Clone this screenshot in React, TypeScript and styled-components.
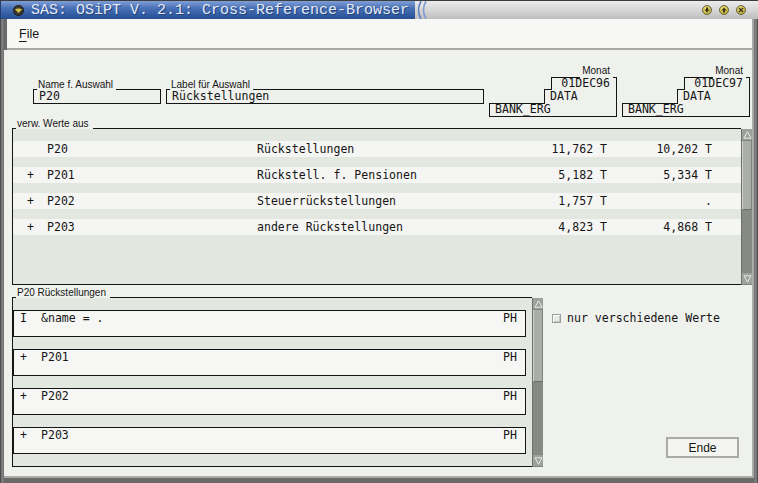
import React from 'react';
import styled, { createGlobalStyle } from 'styled-components';

const MONO = `"DejaVu Sans Mono", "Liberation Mono", monospace`;
const SANS = `"Liberation Sans", Arial, sans-serif`;
const INK = '#151515';

const GlobalStyle = createGlobalStyle`
  html, body {
    margin: 0;
    padding: 0;
    background: #5e5e5e;
  }
  body {
    width: 758px;
    height: 483px;
    overflow: hidden;
  }
  * {
    box-sizing: border-box;
  }
`;

const Window = styled.div`
  width: 758px;
  height: 483px;
  display: flex;
  flex-direction: column;
  background: linear-gradient(to right, #3a3a3a, #8a8a8a 2px, #6a6a6a 4px, #6a6a6a 754px, #8a8a8a 756px, #3a3a3a);
`;

const TitleBar = styled.div`
  height: 19px;
  display: flex;
  border-top: 1px solid #3c3c3c;
  background: linear-gradient(#ececec, #d2d2d2 60%, #bdbdbd);
`;

const TitleTab = styled.div`
  width: 415px;
  display: flex;
  align-items: center;
  gap: 7px;
  padding-left: 12px;
  background: linear-gradient(#7f9fd6, #4a71b6 40%, #3059a0 80%, #2a4f92);
  border-left: 1px solid #233c6c;
`;

const TitleText = styled.span`
  font: 15px/17px "Liberation Mono", monospace;
  color: #e4ebf7;
  text-shadow: 1px 1px 0 #23427c;
  white-space: pre;
`;

const TitleFill = styled.div`
  flex: 1;
`;

const TitleButtons = styled.div`
  display: flex;
  align-items: center;
  gap: 7px;
  padding-right: 12px;
`;

const Frame = styled.div`
  flex: 1;
  display: flex;
  flex-direction: column;
  padding: 0 4px 5px 4px;
`;

const MenuBar = styled.div`
  height: 31px;
  margin-left: 3px;
  display: flex;
  align-items: center;
  padding-left: 12px;
  background: #f7f7f5;
  border-right: 2px solid #a8a8a8;
  border-bottom: 2px solid #a8a8a8;
`;

const MenuItem = styled.span`
  font: 12.5px ${SANS};
  color: ${INK};
  u {
    text-underline-offset: 3px;
  }
`;

const Content = styled.div`
  flex: 1;
  display: flex;
  flex-direction: column;
  background: #eff1ed;
  border-right: 2px solid #a9aba7;
  border-bottom: 2px solid #a9aba7;
`;

const HeaderRow = styled.div`
  display: flex;
  gap: 5px;
  margin-top: 17px;
  padding-left: 29px;
`;

/* caption line: tick, label, rule -- the rule is the top edge of the box below */
const Caption = styled.div<{ $h: number; $trim?: number; $indent?: number }>`
  height: ${p => p.$h}px;
  display: flex;
  align-items: flex-end;
  margin-left: ${p => p.$indent || 0}px;
  margin-right: ${p => p.$trim || 0}px;
`;

const Tick = styled.span<{ $w: number }>`
  width: ${p => p.$w}px;
  border-bottom: 1px solid ${INK};
`;

const Rule = styled.span`
  flex: 1;
  border-bottom: 1px solid ${INK};
`;

const CaptionText = styled.span<{ $pl?: number; $pr?: number; $lift?: number }>`
  font: 10px/11px ${SANS};
  color: ${INK};
  white-space: nowrap;
  padding: 0 ${p => p.$pr ?? 3}px 0 ${p => p.$pl ?? 1}px;
  margin-bottom: ${p => p.$lift || 0}px;
`;

const FieldWrap = styled.div<{ $w: number }>`
  width: ${p => p.$w}px;
  margin-top: 11px;
`;

const FieldBox = styled.div`
  height: 14px;
  border: 1px solid ${INK};
  border-top: none;
  padding-left: 5px;
  font: 11.55px/13px ${MONO};
  color: ${INK};
  white-space: pre;
`;

const ColHead = styled.div`
  width: 128px;
  display: flex;
  flex-direction: column;
`;

const StepRow = styled.div<{ $indent: number; $step: number; $h: number; $right?: boolean; $last?: boolean }>`
  margin-left: ${p => p.$indent}px;
  height: ${p => p.$h}px;
  border-left: 1px solid ${INK};
  border-right: 1px solid ${INK};
  border-bottom: ${p => (p.$last ? `1px solid ${INK}` : 'none')};
  background: linear-gradient(${INK}, ${INK}) no-repeat 0 0 / ${p => p.$step}px 1px;
  text-align: ${p => (p.$right ? 'right' : 'left')};
  padding: 0 ${p => (p.$right ? 6 : 0)}px 0 ${p => (p.$right ? 0 : 5)}px;
  font: 11.55px/${p => (p.$last ? 13 : p.$h)}px ${MONO};
  color: ${INK};
  white-space: pre;
`;

const Group = styled.div<{ $w: number; $mt: number; $ml?: number }>`
  width: ${p => p.$w}px;
  margin-top: ${p => p.$mt}px;
  margin-left: ${p => p.$ml || 0}px;
  display: flex;
  flex-direction: column;
`;

const GroupBody = styled.div`
  display: flex;
`;

const ListPane = styled.div<{ $h: number }>`
  flex: 1;
  height: ${p => p.$h}px;
  padding-top: 12px;
  background: #e2e8e0;
  border-left: 1px solid ${INK};
  border-bottom: 1px solid ${INK};
  overflow: hidden;
`;

const ValueRow = styled.div`
  height: 16px;
  margin-bottom: 10px;
  display: flex;
  padding-left: 14px;
  background: #f5f6f3;
  font: 11.55px/16px ${MONO};
  color: ${INK};
  white-space: pre;
`;

const Cell = styled.span<{ $w: number; $right?: boolean }>`
  width: ${p => p.$w}px;
  flex: none;
  text-align: ${p => (p.$right ? 'right' : 'left')};
`;

const Card = styled.div`
  height: 27px;
  margin: 0 6px 12px 0;
  display: flex;
  padding: 0 8px 0 6px;
  background: #f6f7f4;
  border: 1px solid ${INK};
  font: 11.55px/15px ${MONO};
  color: ${INK};
  white-space: pre;
`;

const CardSign = styled.span`
  width: 21px;
`;

const CardName = styled.span`
  flex: 1;
`;

const ScrollTrack = styled.div<{ $h: number }>`
  width: 11px;
  height: ${p => p.$h}px;
  display: flex;
  flex-direction: column;
  background: #858a83;
  border-left: 1px solid #6d716b;
`;

const ScrollButton = styled.div`
  height: 12px;
  display: flex;
  align-items: center;
  justify-content: center;
  background: #9ea29c;
  border-bottom: 1px solid #80847e;
`;

const Thumb = styled.div<{ $h: number }>`
  height: ${p => p.$h}px;
  background: #aaaea7;
  border-left: 1px solid #cfd2cc;
  border-right: 1px solid #7d817b;
  border-bottom: 1px solid #6a6e68;
`;

const ScrollRest = styled.div`
  flex: 1;
`;

const Lower = styled.div`
  display: flex;
  margin-left: 8px;
`;

const SidePanel = styled.div`
  flex: 1;
  display: flex;
  flex-direction: column;
  padding-left: 9px;
  margin-top: 3px;
`;

const CheckRow = styled.label`
  margin-top: 23px;
  height: 14px;
  display: flex;
  align-items: center;
  gap: 6px;
  font: 11.55px ${MONO};
  color: ${INK};
  white-space: pre;
`;

const CheckBox = styled.span`
  width: 9px;
  height: 9px;
  background: #e8eae6;
  border: 1px solid #9b9e99;
  box-shadow: inset 1px 1px 0 #ffffff, inset -1px -1px 0 #c4c7c2;
`;

const Button = styled.button`
  margin: auto 13px 9px 0;
  align-self: flex-end;
  width: 73px;
  height: 21px;
  padding: 0;
  background: #f4f4f2;
  border: 2px solid #a9aaa7;
  font: 12px ${SANS};
  color: ${INK};
`;

const WinIcon = () => (
  <svg width="11" height="11" viewBox="0 0 11 11">
    <circle cx="5.5" cy="5.5" r="5" fill="#3b3a30" stroke="#1c1c1c" />
    <path d="M2 4.2 Q5.5 2.6 9 4.2 L5.5 8 Z" fill="#d8c24c" />
  </svg>
);

const TabCurl = () => (
  <svg width="16" height="18" viewBox="0 0 16 18">
    <path d="M6 0 Q1 9 6 18" fill="none" stroke="#5f82c0" strokeWidth="1.6" />
    <path d="M11 0 Q6 9 11 18" fill="none" stroke="#7b9bd2" strokeWidth="1.6" />
  </svg>
);

const RoundButton = ({ kind }: { kind: 'down' | 'up' | 'close' }) => (
  <svg width="10" height="10" viewBox="0 0 10 10">
    <defs>
      <radialGradient id={`g-${kind}`} cx="0.4" cy="0.35" r="0.7">
        <stop offset="0" stopColor="#f2e680" />
        <stop offset="1" stopColor="#b3a22a" />
      </radialGradient>
    </defs>
    <circle cx="5" cy="5" r="4.5" fill={`url(#g-${kind})`} stroke="#6a6548" />
    {kind === 'down' && <path d="M4 2.5h2v2h1.6L5 7.5 2.4 4.5H4z" fill="#3b3516" />}
    {kind === 'up' && <path d="M4 7.5h2v-2h1.6L5 2.5 2.4 5.5H4z" fill="#3b3516" />}
    {kind === 'close' && <path d="M3 3l4 4M7 3L3 7" stroke="#3b3516" strokeWidth="1.4" />}
  </svg>
);

const Arrow = ({ up }: { up?: boolean }) => (
  <svg width="9" height="8" viewBox="0 0 9 8">
    <path d={up ? 'M4.5 0.8 L8 7.2 L1 7.2 Z' : 'M4.5 7.2 L8 0.8 L1 0.8 Z'} fill="none" stroke="#e6e9e3" strokeWidth="1" />
  </svg>
);

const Scrollbar = ({ height, thumb }: { height: number; thumb: number }) => (
  <ScrollTrack $h={height}>
    <ScrollButton>
      <Arrow up />
    </ScrollButton>
    <Thumb $h={thumb} />
    <ScrollRest />
    <ScrollButton>
      <Arrow />
    </ScrollButton>
  </ScrollTrack>
);

const Field = ({ width, label, value }: { width: number; label: string; value: string }) => (
  <FieldWrap $w={width}>
    <Caption $h={12}>
      <Tick $w={4} />
      <CaptionText>{label}</CaptionText>
      <Rule />
    </Caption>
    <FieldBox>{value}</FieldBox>
  </FieldWrap>
);

const ColumnHeader = ({ date }: { date: string }) => (
  <ColHead>
    <Caption $h={11} $indent={62}>
      <Rule />
      <CaptionText $pl={2} $pr={3} $lift={2}>
        Monat
      </CaptionText>
      <Tick $w={4} />
    </Caption>
    <StepRow $indent={62} $step={0} $h={11} $right>
      {date}
    </StepRow>
    <StepRow $indent={55} $step={7} $h={14}>
      DATA
    </StepRow>
    <StepRow $indent={0} $step={55} $h={14} $last>
      BANK_ERG
    </StepRow>
  </ColHead>
);

const topRows = [
  { sign: '', name: 'P20', label: 'Rückstellungen', v1: '11,762 T', v2: '10,202 T' },
  { sign: '+', name: 'P201', label: 'Rückstell. f. Pensionen', v1: '5,182 T', v2: '5,334 T' },
  { sign: '+', name: 'P202', label: 'Steuerrückstellungen', v1: '1,757 T', v2: '.' },
  { sign: '+', name: 'P203', label: 'andere Rückstellungen', v1: '4,823 T', v2: '4,868 T' },
];

const lowerCards = [
  { sign: 'I', name: '&name = .' },
  { sign: '+', name: 'P201' },
  { sign: '+', name: 'P202' },
  { sign: '+', name: 'P203' },
];

export default function App() {
  return (
    <>
      <GlobalStyle />
      <Window>
        <TitleBar>
          <TitleTab>
            <WinIcon />
            <TitleText>SAS: OSiPT V. 2.1: Cross-Reference-Browser</TitleText>
          </TitleTab>
          <TabCurl />
          <TitleFill />
          <TitleButtons>
            <RoundButton kind="down" />
            <RoundButton kind="up" />
            <RoundButton kind="close" />
          </TitleButtons>
        </TitleBar>
        <Frame>
          <MenuBar>
            <MenuItem>
              <u>F</u>ile
            </MenuItem>
          </MenuBar>
          <Content>
            <HeaderRow>
              <Field width={128} label="Name f. Auswahl" value="P20" />
              <Field width={318} label="Label für Auswahl" value="Rückstellungen" />
              <ColumnHeader date="01DEC96" />
              <ColumnHeader date="01DEC97" />
            </HeaderRow>

            <Group $w={740} $mt={2} $ml={8}>
              <Caption $h={10} $trim={11}>
                <Tick $w={4} />
                <CaptionText $pr={4}>verw. Werte aus</CaptionText>
                <Rule />
              </Caption>
              <GroupBody>
                <ListPane $h={156}>
                  {topRows.map(r => (
                    <ValueRow key={r.name}>
                      <Cell $w={20}>{r.sign}</Cell>
                      <Cell $w={210}>{r.name}</Cell>
                      <Cell $w={270}>{r.label}</Cell>
                      <Cell $w={80} $right>
                        {r.v1}
                      </Cell>
                      <Cell $w={105} $right>
                        {r.v2}
                      </Cell>
                    </ValueRow>
                  ))}
                </ListPane>
                <Scrollbar height={156} thumb={69} />
              </GroupBody>
            </Group>

            <Lower>
              <Group $w={531} $mt={3}>
                <Caption $h={10} $trim={11}>
                  <Tick $w={4} />
                  <CaptionText $pr={4}>P20 Rückstellungen</CaptionText>
                  <Rule />
                </Caption>
                <GroupBody>
                  <ListPane $h={169}>
                    {lowerCards.map(c => (
                      <Card key={c.name}>
                        <CardSign>{c.sign}</CardSign>
                        <CardName>{c.name}</CardName>
                        <span>PH</span>
                      </Card>
                    ))}
                  </ListPane>
                  <Scrollbar height={169} thumb={72} />
                </GroupBody>
              </Group>
              <SidePanel>
                <CheckRow>
                  <CheckBox />
                  nur verschiedene Werte
                </CheckRow>
                <Button>Ende</Button>
              </SidePanel>
            </Lower>
          </Content>
        </Frame>
      </Window>
    </>
  );
}
